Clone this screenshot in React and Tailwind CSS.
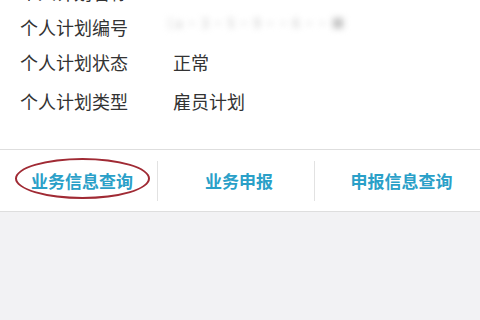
import React from "react";

const rows = [
  { label: "个人计划编号", value: null },
  { label: "个人计划状态", value: "正常" },
  { label: "个人计划类型", value: "雇员计划" },
];

const tabs = ["业务信息查询", "业务申报", "申报信息查询"];

const App = () => {
  return (
    <div className="w-[480px] h-[320px] overflow-hidden bg-[#f2f2f4] font-['Noto_Sans_CJK_SC','Noto_Sans',sans-serif]">
      {/* Info section */}
      <div className="bg-white pb-[27px]">
        {/* partially scrolled row */}
        <div className="h-[35px] -mt-[25px] flex items-center pl-[20px] text-[18px] text-[#333]">
          <span className="w-[153px]">个人计划名称</span>
        </div>
        {rows.map((row, i) => (
          <div
            key={row.label}
            className={`${i === 2 ? "h-[42px]" : "h-[35px]"} flex items-center pl-[20px] text-[18px] text-[#333]`}
          >
            <span className="w-[153px] shrink-0">{row.label}</span>
            {row.value ? (
              <span>{row.value}</span>
            ) : (
              <span className="-ml-[5px] -translate-y-[5px] whitespace-nowrap blur-[3px] text-[13px] text-[#c4c4c4]">
                ( a · 3 · 5 · 9 ·· 6 ·· ■
              </span>
            )}
          </div>
        ))}
      </div>

      {/* Tab bar */}
      <div className="relative bg-white border-t border-b border-[#dedede] h-[63px] flex items-center">
        <div className="w-[157px] flex justify-center pl-[7px] text-[17px] font-bold text-[#2aa0c8]">
          {tabs[0]}
        </div>
        <div className="w-px h-[40px] bg-[#e2e2e2]" />
        <div className="w-[156px] flex justify-center pl-[6px] text-[17px] font-bold text-[#2aa0c8]">
          {tabs[1]}
        </div>
        <div className="w-px h-[40px] bg-[#e2e2e2]" />
        <div className="flex-1 flex justify-center pl-[8px] text-[17px] font-bold text-[#2aa0c8]">
          {tabs[2]}
        </div>
        {/* red annotation ellipse */}
        <div className="absolute left-[15px] top-[8px] w-[135px] h-[41px] rounded-[50%] border-[2.5px] border-[#a02a34]" />
      </div>
    </div>
  );
};

export default App;
